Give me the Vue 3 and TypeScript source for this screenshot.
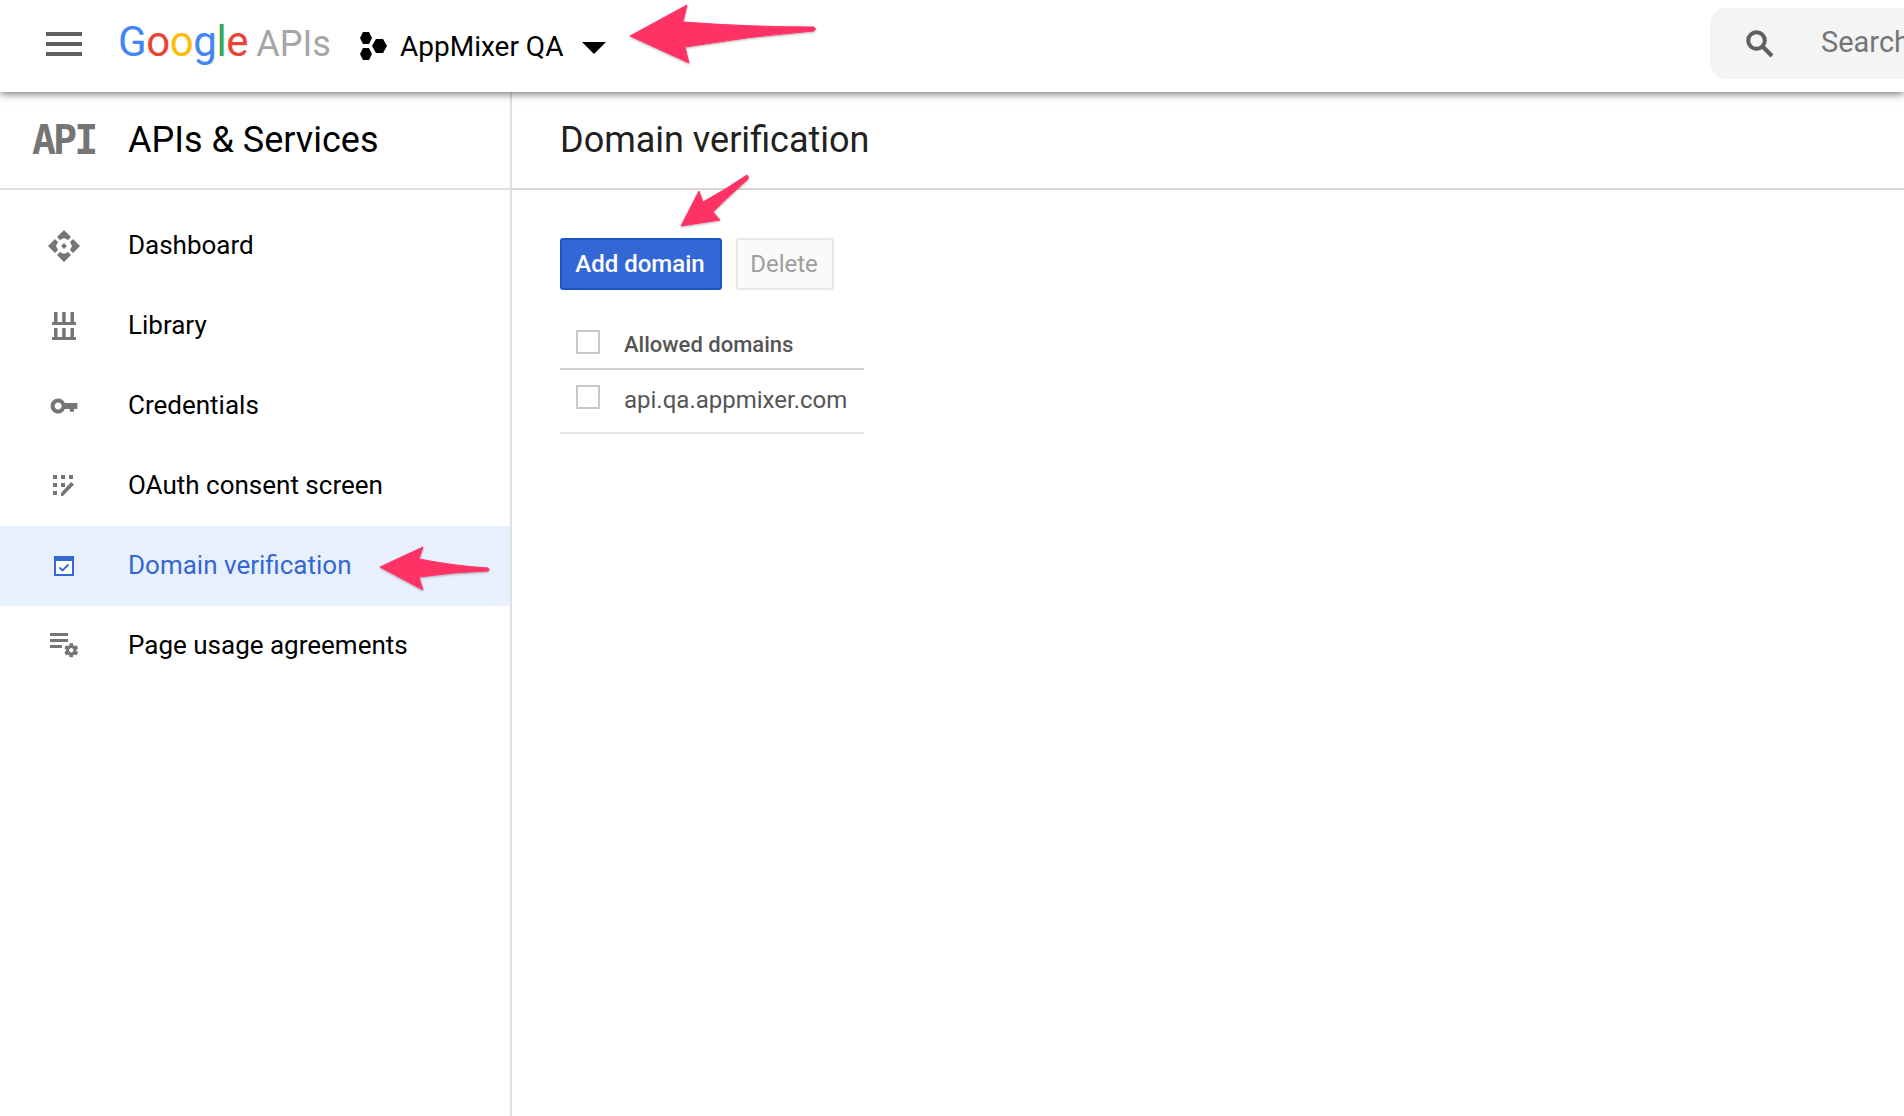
<script setup lang="ts">
interface NavItem { id: string; label: string; active?: boolean }
const nav: NavItem[] = [
  { id: 'dash', label: 'Dashboard' },
  { id: 'lib', label: 'Library' },
  { id: 'key', label: 'Credentials' },
  { id: 'oauth', label: 'OAuth consent screen' },
  { id: 'domain', label: 'Domain verification', active: true },
  { id: 'page', label: 'Page usage agreements' },
]
</script>

<template>
  <div class="page">
    <header class="topbar">
      <svg class="burger" width="36" height="24" viewBox="0 0 36 24"><path d="M0 0h36v4H0zM0 10h36v4H0zM0 20h36v4H0z" fill="#5f5f5f"/></svg>
      <div class="logo"><span class="lb">G</span><span class="lr">o</span><span class="ly">o</span><span class="lb">g</span><span class="lg">l</span><span class="lr">e</span><span class="apis">APIs</span></div>
      <svg class="hex" width="27" height="28" viewBox="0 0 27 28"><path d="M3 0h6l3 6-3 6H3L0 6zM3 16h6l3 6-3 6H3l-3-6zM16 7h7l4 7-4 7h-7l-4-7z" fill="#000"/></svg>
      <span class="project">AppMixer QA</span>
      <svg class="caret" width="24" height="12" viewBox="0 0 24 12"><path d="M0 0h24L12 12z" fill="#000"/></svg>
      <div class="search">
        <svg width="28" height="28" viewBox="0 0 28 28"><circle cx="10.500" cy="10.500" r="8.300" fill="none" stroke="#5f5f5f" stroke-width="4"/><path d="M16 16l10 10" stroke="#5f5f5f" stroke-width="4.200" fill="none"/></svg>
        <span class="search-text">Search</span>
      </div>
    </header>

    <div class="body">
      <aside class="side">
        <div class="side-head">
          <span class="api-mark">API</span>
          <span class="side-title">APIs &amp; Services</span>
        </div>
        <nav class="nav">
          <a v-for="n in nav" :key="n.id" class="nav-item" :class="{ active: n.active }">
            <span class="ico">
              <svg v-if="n.id === 'dash'" width="32" height="32" viewBox="0 0 32 32" fill="#757575"><path d="M16 0l7 7-3 3-4-2-4 2-3-3zM0 16l7-7 3 3-2 4 2 4-3 3zM32 16l-7-7-3 3 2 4-2 4 3 3zM16 32l-7-7 3-3 4 2 4-2 3 3zM16 13l3 3-3 3-3-3z"/></svg>
              <svg v-else-if="n.id === 'lib'" width="24" height="28" viewBox="0 0 24 28" fill="#757575"><path d="M2 0h3.500v10H2zM10.200 0h3.500v10h-3.500zM18.500 0H22v10h-3.500zM0 10h24v3H0zM2 16h3.500v9H2zM10.200 16h3.500v9h-3.500zM18.500 16H22v9h-3.500zM0 25h24v3H0z"/></svg>
              <svg v-else-if="n.id === 'key'" width="28" height="28" viewBox="0 0 24 24" fill="#757575"><path d="M12.650 9.500C11.830 7.170 9.610 5.500 7 5.500c-3.310 0-6.500 2.690-6.500 6.500s3.190 6.500 6.500 6.500c2.610 0 4.830-1.670 5.650-4H17v2.500h3.500v-2.500h3V9.500H12.650zM7 15c-1.650 0-3-1.350-3-3s1.350-3 3-3 3 1.350 3 3-1.350 3-3 3z"/></svg>
              <svg v-else-if="n.id === 'oauth'" width="22" height="22" viewBox="0 0 22 22" fill="#757575"><path d="M0 0h4v4H0zM8 0h4v4H8zM16 0h4v4h-4zM0 8h4v4H0zM8 8h4v4H8zM0 16h4v4H0zM8 18l10-11 3 2.500L10 21H8z"/></svg>
              <svg v-else-if="n.id === 'domain'" width="20" height="20" viewBox="0 0 20 20"><path d="M1 1h18v18H1z" fill="#fff" stroke="#3367d6" stroke-width="2"/><path d="M0 0h20v5H0z" fill="#3367d6"/><path d="M5.500 11.500l3 3 6-6" fill="none" stroke="#3367d6" stroke-width="1.800"/></svg>
              <svg v-else class="page-ico" width="30" height="26" viewBox="0 0 30 26" fill="#757575"><path d="M0 0h18v3H0zM0 6h18v3H0zM0 12h12v3H0z"/><g transform="translate(12.500 8.500) scale(.73)"><path d="M19.140 12.940c.04-.3.060-.61.060-.94 0-.32-.02-.64-.07-.94l2.030-1.580a.49.49 0 0 0 .12-.61l-1.920-3.320a.49.49 0 0 0-.59-.22l-2.390.96c-.5-.38-1.030-.7-1.620-.94l-.36-2.540a.48.48 0 0 0-.48-.41h-3.840c-.24 0-.43.17-.47.41l-.36 2.540c-.59.24-1.130.57-1.620.94l-2.390-.96a.49.49 0 0 0-.59.22L2.740 8.870c-.12.21-.08.47.12.61l2.030 1.580c-.05.3-.09.63-.09.94s.02.64.07.94l-2.030 1.580a.49.49 0 0 0-.12.61l1.920 3.320c.12.22.37.29.59.22l2.390-.96c.5.38 1.030.7 1.620.94l.36 2.540c.05.24.24.41.48.41h3.840c.24 0 .44-.17.47-.41l.36-2.540c.59-.24 1.130-.56 1.620-.94l2.390.96c.22.08.47 0 .59-.22l1.920-3.320c.12-.22.07-.47-.12-.61l-2.010-1.580zM12 15c-1.650 0-3-1.350-3-3s1.350-3 3-3 3 1.350 3 3-1.350 3-3 3z"/></g></svg>
            </span>
            <span class="nav-label">{{ n.label }}</span>
          </a>
        </nav>
      </aside>

      <main class="main">
        <div class="main-head"><h1 class="main-title">Domain verification</h1></div>
        <div class="content">
          <div class="actions">
            <button class="btn primary">Add domain</button>
            <button class="btn disabled">Delete</button>
          </div>
          <div class="tbl">
            <div class="tr th"><span class="cb"></span><span class="cell">Allowed domains</span></div>
            <div class="tr td"><span class="cb"></span><span class="cell">api.qa.appmixer.com</span></div>
          </div>
        </div>
      </main>
    </div>

    <svg class="arrows" width="1904" height="1116" viewBox="0 0 1904 1116">
      <defs>
        <filter id="ash" x="-10%" y="-20%" width="120%" height="140%"><feDropShadow dx="0" dy="1" stdDeviation="1.200" flood-color="#000" flood-opacity=".3"/></filter>
      </defs>
      <g fill="#ff3366" stroke="#ff3366" stroke-width="1" stroke-linejoin="round" filter="url(#ash)">
        <path d="M630 36L687 5L683 22Q750 27 814 27Q817 29 814 31Q750 36 685 47L689 63z"/>
        <path d="M681 226L699 191L703 202Q725 190 747 175Q749 177 748 179Q730 195 713 212L720 220z"/>
        <path d="M380 567L423 547L419 559Q455 566 488 568Q490 570 488 571Q455 572 419 577L423 590z"/>
      </g>
    </svg>
  </div>
</template>

<style>
html, body { margin: 0; background: #fff; overflow: hidden; }
</style>

<style scoped>
.page {
  position: relative;
  width: 1904px;
  height: 1116px;
  overflow: hidden;
  display: flex;
  flex-direction: column;
  font-family: Roboto, "Liberation Sans", sans-serif;
  color: #000;
}
.topbar {
  position: relative;
  z-index: 2;
  flex: 0 0 92px;
  display: flex;
  align-items: center;
  background: #fff;
  box-shadow: 0 2px 8px rgba(0, 0, 0, 0.55);
  padding-left: 46px;
}
.burger { flex: none; margin-top: -4px; }
.logo {
  margin-left: 36px;
  margin-top: -6px;
  font-size: 42px;
  line-height: 48px;
  letter-spacing: -0.4px;
  white-space: nowrap;
  width: 213px;
}
.lb { color: #4285f4; }
.lr { color: #ea4335; }
.ly { color: #fbbc05; }
.lg { color: #34a853; }
.apis { color: #a6a6a6; margin-left: 8px; font-size: 36px; letter-spacing: 0; }
.hex { flex: none; margin-left: 29px; margin-top: -1px; }
.project { margin-left: 13px; font-size: 28px; white-space: nowrap; margin-top: 1px; }
.caret { flex: none; margin-left: 19px; margin-top: 4px; }
.search {
  margin-left: auto;
  flex: 0 0 194px;
  align-self: flex-start;
  margin-top: 8px;
  height: 71px;
  background: #f4f4f4;
  border-radius: 16px 0 0 16px;
  display: flex;
  align-items: center;
  padding-left: 36px;
  box-sizing: border-box;
  overflow: hidden;
  white-space: nowrap;
}
.search svg { flex: none; }
.search-text { margin-left: 47px; font-size: 29px; color: #757575; margin-top: -3px; }
.body { flex: 1; display: flex; min-height: 0; }
.side {
  flex: 0 0 512px;
  box-sizing: border-box;
  border-right: 2px solid #e0e0e0;
}
.side-head {
  height: 98px;
  box-sizing: border-box;
  border-bottom: 2px solid #e0e0e0;
  display: flex;
  align-items: center;
  padding-left: 32px;
}
.api-mark {
  width: 96px;
  font-family: "DejaVu Sans Mono", monospace;
  font-weight: 700;
  font-size: 40px;
  letter-spacing: -3px;
  color: #757575;
}
.side-title { font-size: 36px; }
.nav { padding-top: 16px; }
.nav-item {
  height: 80px;
  display: flex;
  align-items: center;
  font-size: 26px;
}
.nav-label { margin-top: -2px; }
.nav-item.active { background: #e8f0fe; color: #3367d6; }
.ico { flex: 0 0 128px; display: flex; justify-content: center; }
.page-ico { margin-left: 2px; }
.main { flex: 1; min-width: 0; }
.main-head {
  height: 98px;
  box-sizing: border-box;
  border-bottom: 2px solid #d6d6d6;
  display: flex;
  align-items: center;
  padding-left: 48px;
}
.main-title { margin: 0; font-size: 36px; font-weight: 400; color: #212121; }
.content { padding: 48px 0 0 48px; }
.actions { display: flex; gap: 14px; }
.btn {
  height: 52px;
  box-sizing: border-box;
  font-family: inherit;
  font-size: 24px;
  border-radius: 3px;
  padding: 0 2px 0 0;
}
.primary {
  width: 162px;
  color: #fff;
  font-weight: 500;
  background: #3367d6;
  border: 2px solid #1c57c5;
}
.disabled {
  width: 98px;
  color: #9e9e9e;
  background: #fafafa;
  border: 2px solid #e8e8e8;
}
.tbl { width: 304px; margin-top: 28px; font-size: 24px; color: #555; }
.tr { display: flex; align-items: center; }
.th { height: 50px; border-bottom: 2px solid #d0d0d0; font-weight: 500; font-size: 22px; }
.td { height: 62px; border-bottom: 2px solid #e4e4e4; }
.cb {
  flex: none;
  width: 24px;
  height: 24px;
  box-sizing: border-box;
  border: 2px solid #c8c8c8;
  margin: 0 24px 0 16px;
}
.th .cb { margin-top: -2px; }
.th .cell { margin-top: 2px; }
.td .cb { margin-top: -9px; }
.td .cell { margin-top: -3px; }
.arrows { position: absolute; left: 0; top: 0; z-index: 3; pointer-events: none; }
</style>
